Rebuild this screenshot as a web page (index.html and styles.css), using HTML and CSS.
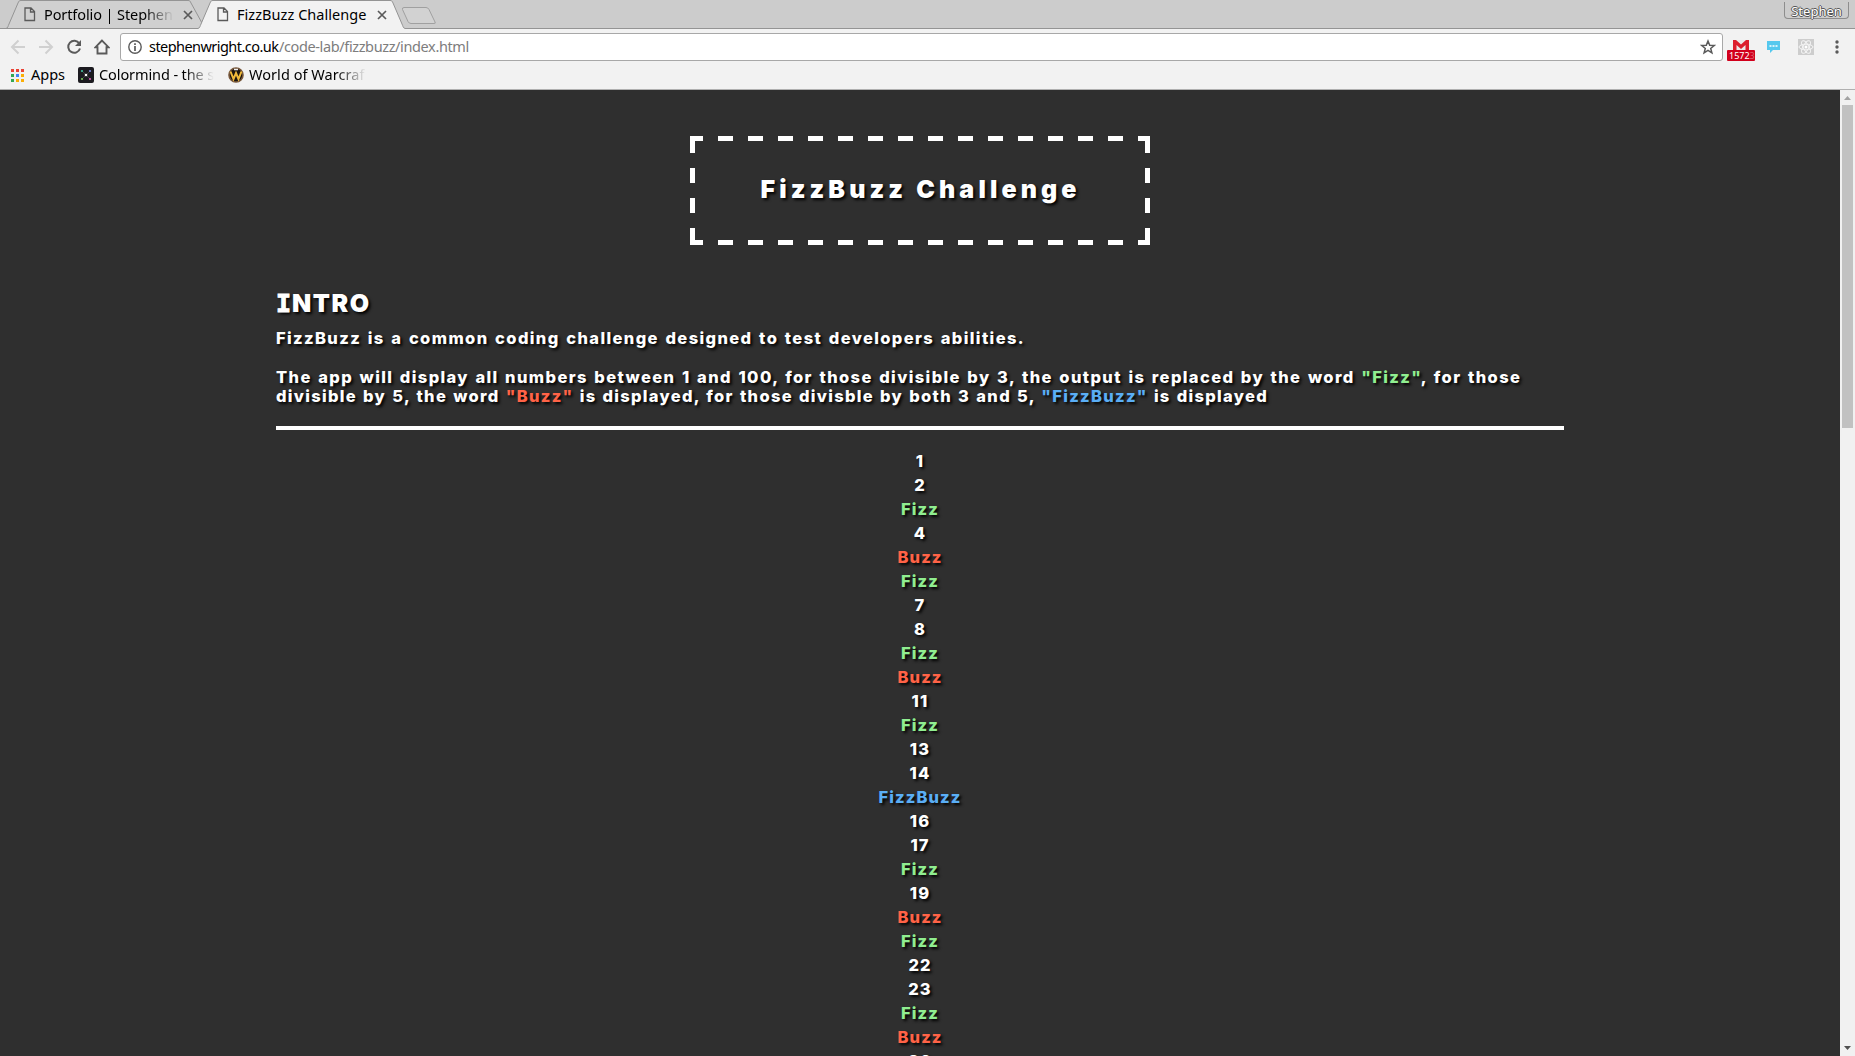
FILE: index.html
```html
<!DOCTYPE html>
<html lang="en">
<head>
<meta charset="utf-8">
<title>FizzBuzz Challenge</title>
<link rel="stylesheet" href="styles.css">
</head>
<body>
<header class="browser">
  <div class="tabstrip">
    <svg class="tab-shapes" width="1855" height="29" viewBox="0 0 1855 29" fill="none">
      <path d="M6 28.5C8 28 8 26 9 24L18 3C19 1 19 .5 21 .5H188C190 .5 190 1 191 3L205 28.5" fill="#d0d0d0" stroke="#949494"/>
      <path d="M0 28.5H198C200 28 200 26 201 24L210 3C211 1 211 .5 213 .5H390C392 .5 392 1 393 3L402 24C403 26 403 28 405 28.5H1855V30H0Z" fill="#f2f2f2" stroke="#949494"/>
      <path d="M404 7.5H426Q428 7.5 429 9.500L435 22Q436 23.500 434 23.500H411Q409 23.500 408 21.500L402.500 9.500Q402 7.500 404 7.500Z" fill="#d2d2d2" stroke="#a0a0a0"/>
    </svg>
    <div class="tab first">
      <svg class="page" width="12" height="15" viewBox="0 0 12 15"><path d="M1 1H7L10.500 4.500V13.500H1ZM6.500 1V5H10.500" fill="none" stroke="#5a5a5a" stroke-width="1.300"/></svg>
      <span class="label fade tabname1">Portfolio | Stephen</span>
      <svg class="close" width="10" height="10" viewBox="0 0 10 10"><path d="M1 1L9 9M9 1L1 9" stroke="#5a5a5a" stroke-width="1.700"/></svg>
    </div>
    <div class="tab second">
      <svg class="page" width="12" height="15" viewBox="0 0 12 15"><path d="M1 1H7L10.500 4.500V13.500H1ZM6.500 1V5H10.500" fill="none" stroke="#5a5a5a" stroke-width="1.300"/></svg>
      <span class="label tabname2">FizzBuzz Challenge</span>
      <svg class="close" width="10" height="10" viewBox="0 0 10 10"><path d="M1 1L9 9M9 1L1 9" stroke="#5a5a5a" stroke-width="1.700"/></svg>
    </div>
    <div class="profile"><span>Stephen</span></div>
  </div>
  <div class="toolbar">
    <div class="nav">
      <svg width="16" height="16" viewBox="0 0 16 16"><path d="M15 8H2M8.500 1.500L2 8L8.500 14.500" fill="none" stroke="#d0d0d0" stroke-width="2"/></svg>
      <svg width="16" height="16" viewBox="0 0 16 16"><path d="M1 8H14M7.500 1.500L14 8L7.500 14.500" fill="none" stroke="#d0d0d0" stroke-width="2"/></svg>
      <svg width="16" height="16" viewBox="0 0 16 16"><path d="M13.300 4.500A6 6 0 1 0 14 9.500" fill="none" stroke="#5a5a5a" stroke-width="2"/><path d="M15 1V7H9Z" fill="#5a5a5a"/></svg>
      <svg width="16" height="16" viewBox="0 0 16 16"><path d="M8 1.500L1.500 8.200H3.500V14.500H12.500V8.200H14.500Z" fill="none" stroke="#5a5a5a" stroke-width="1.900"/></svg>
    </div>
    <div class="omnibox">
      <svg class="info" width="14" height="14" viewBox="0 0 14 14"><circle cx="7" cy="7" r="6.200" fill="none" stroke="#5a5a5a" stroke-width="1.400"/><path d="M7 3.200V4.900M7 6V11" stroke="#5a5a5a" stroke-width="1.700"/></svg>
      <span class="host">stephenwright.co.uk</span><span class="path">/code-lab/fizzbuzz/index.html</span>
      <svg class="star" width="16" height="16" viewBox="0 0 16 16"><path d="M8 2L9.700 6.200L14.200 6.500L10.700 9.400L11.900 13.800L8 11.400L4.100 13.800L5.300 9.400L1.800 6.500L6.300 6.200Z" fill="none" stroke="#5a5a5a" stroke-width="1.500"/></svg>
    </div>
    <div class="extensions">
      <div class="mail">
        <svg width="16" height="12" viewBox="0 0 16 12"><path d="M0 0H16V12H0Z" fill="#dc1f2d"/><path d="M3 0H13L8 4.500ZM3.500 12V5L8 9L12.500 5V12Z" fill="#ece9e9"/></svg>
        <span class="badge">1572<i>3</i></span>
      </div>
      <svg class="chat" width="13" height="12" viewBox="0 0 13 12"><path d="M0 0H13V9H6L3 12V9H0Z" fill="#55c8ee"/><path d="M2.500 5H4.500M5.500 5H7.500M8.500 5H10.500" stroke="#fff" stroke-width="1.500"/></svg>
      <svg class="react" width="16" height="16" viewBox="0 0 16 16"><path d="M0 0H16V16H0Z" fill="#cdcdcd"/><g fill="none" stroke="#f4f4f4"><ellipse cx="8" cy="8" rx="7" ry="2.800"/><ellipse cx="8" cy="8" rx="7" ry="2.800" transform="rotate(60 8 8)"/><ellipse cx="8" cy="8" rx="7" ry="2.800" transform="rotate(120 8 8)"/></g><circle cx="8" cy="8" r="1.500" fill="#fff"/></svg>
      <svg class="menu" width="4" height="14" viewBox="0 0 4 14" fill="#5a5a5a"><circle cx="2" cy="2" r="1.700"/><circle cx="2" cy="7" r="1.700"/><circle cx="2" cy="12" r="1.700"/></svg>
    </div>
  </div>
  <div class="bookmarks">
    <svg class="apps" width="13" height="13" viewBox="0 0 13 13"><path d="M0 0H3V3H0ZM5 0H8V3H5ZM10 0H13V3H10Z" fill="#ea4335"/><path d="M0 5H3V8H0ZM0 10H3V13H0Z" fill="#34a853"/><path d="M5 5H8V8H5Z" fill="#4285f4"/><path d="M10 5H13V8H10ZM5 10H8V13H5ZM10 10H13V13H10Z" fill="#fbae05"/></svg>
    <span class="bm-apps">Apps</span>
    <svg class="colormind" width="16" height="16" viewBox="0 0 16 16"><rect width="16" height="16" rx="2" fill="#1c1b20"/><path d="M4.500 4.500L11.500 11.500M11.500 4.500L4.500 11.500" stroke="#444"/><g><circle cx="4" cy="4" r="1.100" fill="#45c0a0"/><circle cx="12" cy="4" r="1.100" fill="#7d8be0"/><circle cx="8" cy="8" r="1.300" fill="#fff"/><circle cx="4" cy="12" r="1.100" fill="#7fc85a"/><circle cx="12" cy="12" r="1.100" fill="#d95db2"/></g></svg>
    <span class="fade bm-color">Colormind - the s</span>
    <svg class="warcraft" width="16" height="16" viewBox="0 0 16 16"><circle cx="8" cy="8" r="7" fill="#1b1510" stroke="#76563a" stroke-width="1.600"/><path d="M2.500 4.500L5.500 12L8 6L10.500 12L13.500 4.500" fill="none" stroke="#f0b93a" stroke-width="2"/><path d="M6 2.500H10" stroke="#eee" stroke-width="1.500"/></svg>
    <span class="fade bm-wow">World of Warcraf</span>
  </div>
</header>
<div class="viewport">
  <main class="content">
    <h1 class="banner"><span>FizzBuzz Challenge</span></h1>
    <section class="intro">
      <h2><span class="slab">I</span>NTRO</h2>
      <p class="lead">FizzBuzz is a common coding challenge designed to test developers abilities.</p>
      <p class="rules"><span class="line l1">The app will display all numbers between 1 and 100, for those divisible by 3, the output is replaced by the word <span class="fizz">"Fizz"</span>, for those</span> <span class="line l2">divisible by 5, the word <span class="buzz">"Buzz"</span> is displayed, for those divisble by both 3 and 5, <span class="fizzbuzz">"FizzBuzz"</span> is displayed</span></p>
    </section>
    <ul class="output">
      <li>1</li><li>2</li><li class="fizz">Fizz</li><li>4</li><li class="buzz">Buzz</li>
      <li class="fizz">Fizz</li><li>7</li><li>8</li><li class="fizz">Fizz</li><li class="buzz">Buzz</li>
      <li>11</li><li class="fizz">Fizz</li><li>13</li><li>14</li><li class="fizzbuzz">FizzBuzz</li>
      <li>16</li><li>17</li><li class="fizz">Fizz</li><li>19</li><li class="buzz">Buzz</li>
      <li class="fizz">Fizz</li><li>22</li><li>23</li><li class="fizz">Fizz</li><li class="buzz">Buzz</li>
      <li>26</li>
    </ul>
  </main>
  <div class="scrollbar">
    <svg width="15" height="15" viewBox="0 0 15 15"><path d="M4 10L7.500 6L11 10Z" fill="#a3a3a3"/></svg>
    <div class="thumb"></div>
    <svg class="down" width="15" height="15" viewBox="0 0 15 15"><path d="M4 5L7.500 9L11 5Z" fill="#505050"/></svg>
  </div>
</div>
</body>
</html>
```
FILE: styles.css
```css
* { box-sizing: border-box; }
body {
  margin: 0;
  height: 1056px;
  overflow: hidden;
  display: flex;
  flex-direction: column;
  background: #2f2f2f;
}
svg { display: block; flex: none; }

/* Browser frame */
.browser {
  flex: none;
  height: 90px;
  background: #f2f2f2;
  border-bottom: 1px solid #b0b0b0;
  font: 14.5px/20px "Noto Sans", "Open Sans", sans-serif;
  color: #000;
  white-space: nowrap;
}
.tabstrip {
  position: relative;
  display: flex;
  height: 29px;
  background: #ccc;
}
.tab-shapes { position: absolute; left: 0; top: 0; }
.tab { position: relative; display: flex; align-items: center; height: 29px; }
.first { width: 193px; padding-left: 24px; }
.second { width: 200px; padding-left: 24px; }
.label { margin-left: 8px; padding-bottom: 2px; }
.tabname1 { width: 132px; letter-spacing: -0.1px; }
.first .close { margin-left: 9px; }
.tabname2 { width: 134px; letter-spacing: 0.05px; }
.second .close { margin-left: 6px; }
.fade {
  overflow: hidden;
  -webkit-mask-image: linear-gradient(to right, #000 calc(100% - 30px), transparent 100%);
  mask-image: linear-gradient(to right, #000 calc(100% - 30px), transparent 100%);
}
.profile {
  position: relative;
  width: 65px;
  height: 17px;
  margin: 2px 6px 0 auto;
  border: 1px solid #8d8d8d;
  border-top: 0;
  border-radius: 0 0 4px 4px;
  color: #fff;
  font-size: 13px;
  line-height: 18px;
  text-align: center;
  text-shadow: 1px 0 #555, -1px 0 #555, 0 1px #555, 0 -1px #555;
}
.toolbar { display: flex; height: 33px; padding: 4px 0 1px 10px; }
.nav { display: flex; gap: 12px; width: 110px; padding-top: 6px; }
.omnibox {
  display: flex;
  align-items: center;
  width: 1603px;
  height: 28px;
  padding: 0 6px 0 7px;
  background: #fff;
  border: 1px solid #a8a8a8;
  border-radius: 3px;
}
.host { margin-left: 7px; width: 130px; padding-bottom: 2px; letter-spacing: -0.55px; }
.path { padding-bottom: 2px; color: #7d7d7d; letter-spacing: -0.38px; }
.star { margin-left: auto; }
.extensions { display: flex; padding-top: 7px; }
.mail { position: relative; width: 16px; margin-left: 10px; }
.badge {
  position: absolute;
  left: -6px;
  top: 10px;
  width: 28px;
  height: 11px;
  padding-left: 2px;
  overflow: hidden;
  border-radius: 1px;
  background: #d2001c;
  color: #fff;
  font-size: 9px;
  line-height: 11px;
}
.badge i { font-style: normal; color: #df6070; }
.chat { margin: 1px 0 0 18px; }
.react { margin: -1px 0 0 18px; }
.menu { margin: 0 0 0 21px; }
.bookmarks { display: flex; align-items: center; height: 26px; padding-left: 11px; }
.bookmarks span { padding-bottom: 2px; }
.bm-apps { width: 47px; margin-left: 7px; }
.bm-color { width: 115px; margin-left: 5px; letter-spacing: -0.1px; }
.warcraft { margin-left: 14px; }
.bm-wow { width: 117px; margin-left: 5px; letter-spacing: 0.05px; }

/* Page */
.viewport { flex: 1; display: flex; min-height: 0; }
.content {
  flex: 1;
  overflow: hidden;
  padding-top: 46px;
  color: #fff;
  font: 800 16.5px/19px Inter, Roboto, sans-serif;
  text-shadow: 2px 2px 3px #000;
}
.banner {
  display: flex;
  justify-content: center;
  width: 460px;
  height: 109px;
  margin: 0 auto;
  padding: 39px 0 0 1px;
  font-weight: 900;
  font-size: 25px;
  line-height: 29px;
  letter-spacing: 4.1px;
  white-space: nowrap;
  --h: repeating-linear-gradient(to right, #fff 0 15px, transparent 15px 30px) -2px;
  --v: repeating-linear-gradient(to bottom, #fff 0 15px, transparent 15px 30px);
  background:
    linear-gradient(#fff, #fff) 0 0 / 5px 5px no-repeat,
    linear-gradient(#fff, #fff) 100% 0 / 5px 5px no-repeat,
    linear-gradient(#fff, #fff) 0 100% / 5px 5px no-repeat,
    linear-gradient(#fff, #fff) 100% 100% / 5px 5px no-repeat,
    var(--h) 0 / 480px 5px no-repeat,
    var(--h) 104px / 480px 5px no-repeat,
    var(--v) 0 2px / 5px 105px no-repeat,
    var(--v) 455px 2px / 5px 105px no-repeat;
}
.intro {
  width: 1288px;
  height: 185px;
  margin: 0 auto;
  padding-top: 44px;
  border-bottom: 4px solid #fff;
  white-space: nowrap;
}
.intro h2 {
  margin: 0;
  font-weight: 900;
  font-size: 25px;
  line-height: 28px;
  letter-spacing: 1.5px;
}
.slab {
  font-family: "DejaVu Sans Mono", monospace;
  font-weight: 700;
  letter-spacing: 1px;
  -webkit-text-stroke: 1px #fff;
}
.intro p { margin: 0; }
.intro .lead { margin-top: 11px; letter-spacing: 1.38px; word-spacing: 1.6px; }
.intro .rules { margin-top: 20px; }
.line { display: block; }
.l1 { letter-spacing: 1.38px; word-spacing: 1.5px; }
.l2 { letter-spacing: 1.3px; word-spacing: 1.2px; }
.fizz { color: #90ee90; }
.buzz { color: #ff6347; }
.fizzbuzz { color: #5aaef5; }
.output {
  margin: 0;
  padding: 19px 0 0;
  list-style: none;
  text-align: center;
  line-height: 24px;
  letter-spacing: 1.1px;
}
.scrollbar {
  flex: none;
  display: flex;
  flex-direction: column;
  width: 15px;
  background: #f1f1f1;
}
.thumb { width: 11px; height: 323px; margin-left: 2px; background: #c1c1c1; }
.down { margin-top: auto; }
```
